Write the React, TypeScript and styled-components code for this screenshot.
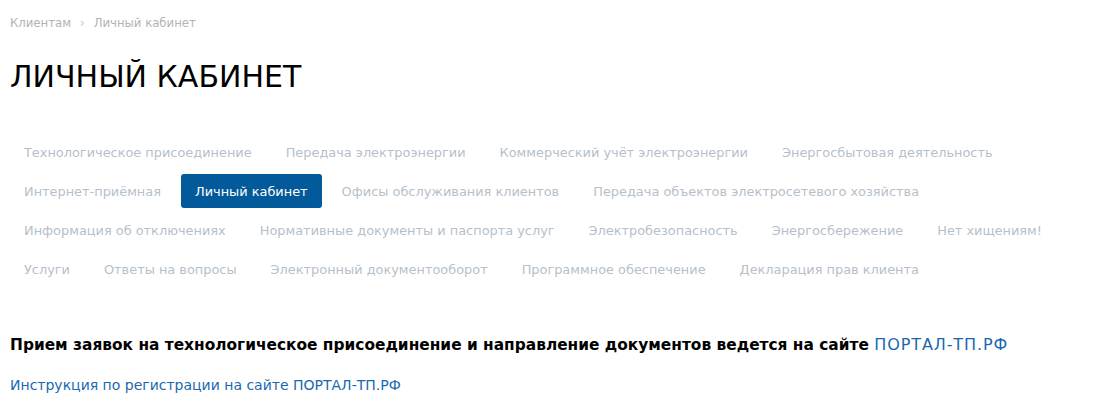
import styled, { createGlobalStyle } from 'styled-components'

const GlobalStyles = createGlobalStyle`
  body {
    margin: 0;
    background: #fff;
    font-family: 'DejaVu Sans', 'Open Sans', sans-serif;
    color: #000;
  }
  * {
    box-sizing: border-box;
  }
`

const Page = styled.div`
  padding: 0 10px;
`

const Breadcrumbs = styled.nav`
  display: flex;
  align-items: center;
  gap: 9px;
  height: 45px;
  font-size: 11.7px;
  color: #b3b3b3;
`

const Crumb = styled.span``

const CrumbSep = styled.span`
  color: #c4c4c4;
`

const Title = styled.h1`
  margin: 0;
  padding-top: 13px;
  height: 90px;
  font-size: 30px;
  font-weight: 400;
  line-height: 38px;
  color: #000;
`

const Tabs = styled.div`
  display: flex;
  flex-direction: column;
  row-gap: 5px;
`

const TabRow = styled.div`
  display: flex;
  column-gap: 6px;
`

const Tab = styled.a<{ $active?: boolean }>`
  display: flex;
  align-items: center;
  height: 34px;
  padding: 0 14px;
  border-radius: 3px;
  font-size: 12.9px;
  white-space: nowrap;
  text-decoration: none;
  color: ${({ $active }) => ($active ? '#fff' : '#b6bfcb')};
  background: ${({ $active }) => ($active ? '#035a9a' : 'transparent')};
`

const Notice = styled.p`
  margin: 0;
  padding-top: 48px;
  font-size: 15.4px;
  font-weight: 600;
  line-height: 22px;
`

const Link = styled.a`
  color: #1a68b0;
  font-size: 16px;
  font-weight: 400;
  letter-spacing: 0.9px;
  text-decoration: none;
`

const Instruction = styled.a`
  display: block;
  margin-top: 19px;
  font-size: 14px;
  line-height: 20px;
  color: #1a68b0;
  text-decoration: none;
`

const tabs = [
  'Технологическое присоединение',
  'Передача электроэнергии',
  'Коммерческий учёт электроэнергии',
  'Энергосбытовая деятельность',
  'Интернет-приёмная',
  'Личный кабинет',
  'Офисы обслуживания клиентов',
  'Передача объектов электросетевого хозяйства',
  'Информация об отключениях',
  'Нормативные документы и паспорта услуг',
  'Электробезопасность',
  'Энергосбережение',
  'Нет хищениям!',
  'Услуги',
  'Ответы на вопросы',
  'Электронный документооборот',
  'Программное обеспечение',
  'Декларация прав клиента',
]

const rows = [[0, 4], [4, 8], [8, 13], [13, 18]]

function App() {
  return (
    <>
      <GlobalStyles />
      <Page>
        <Breadcrumbs>
          <Crumb>Клиентам</Crumb>
          <CrumbSep>›</CrumbSep>
          <Crumb>Личный кабинет</Crumb>
        </Breadcrumbs>
        <Title>ЛИЧНЫЙ КАБИНЕТ</Title>
        <Tabs>
          {rows.map(([a, b]) => (
            <TabRow key={a}>
              {tabs.slice(a, b).map(t => (
                <Tab key={t} $active={t === 'Личный кабинет'}>
                  {t}
                </Tab>
              ))}
            </TabRow>
          ))}
        </Tabs>
        <Notice>
          Прием заявок на технологическое присоединение и направление документов ведется на сайте{' '}
          <Link>ПОРТАЛ-ТП.РФ</Link>
        </Notice>
        <Instruction>Инструкция по регистрации на сайте ПОРТАЛ-ТП.РФ</Instruction>
      </Page>
    </>
  )
}

export default App
